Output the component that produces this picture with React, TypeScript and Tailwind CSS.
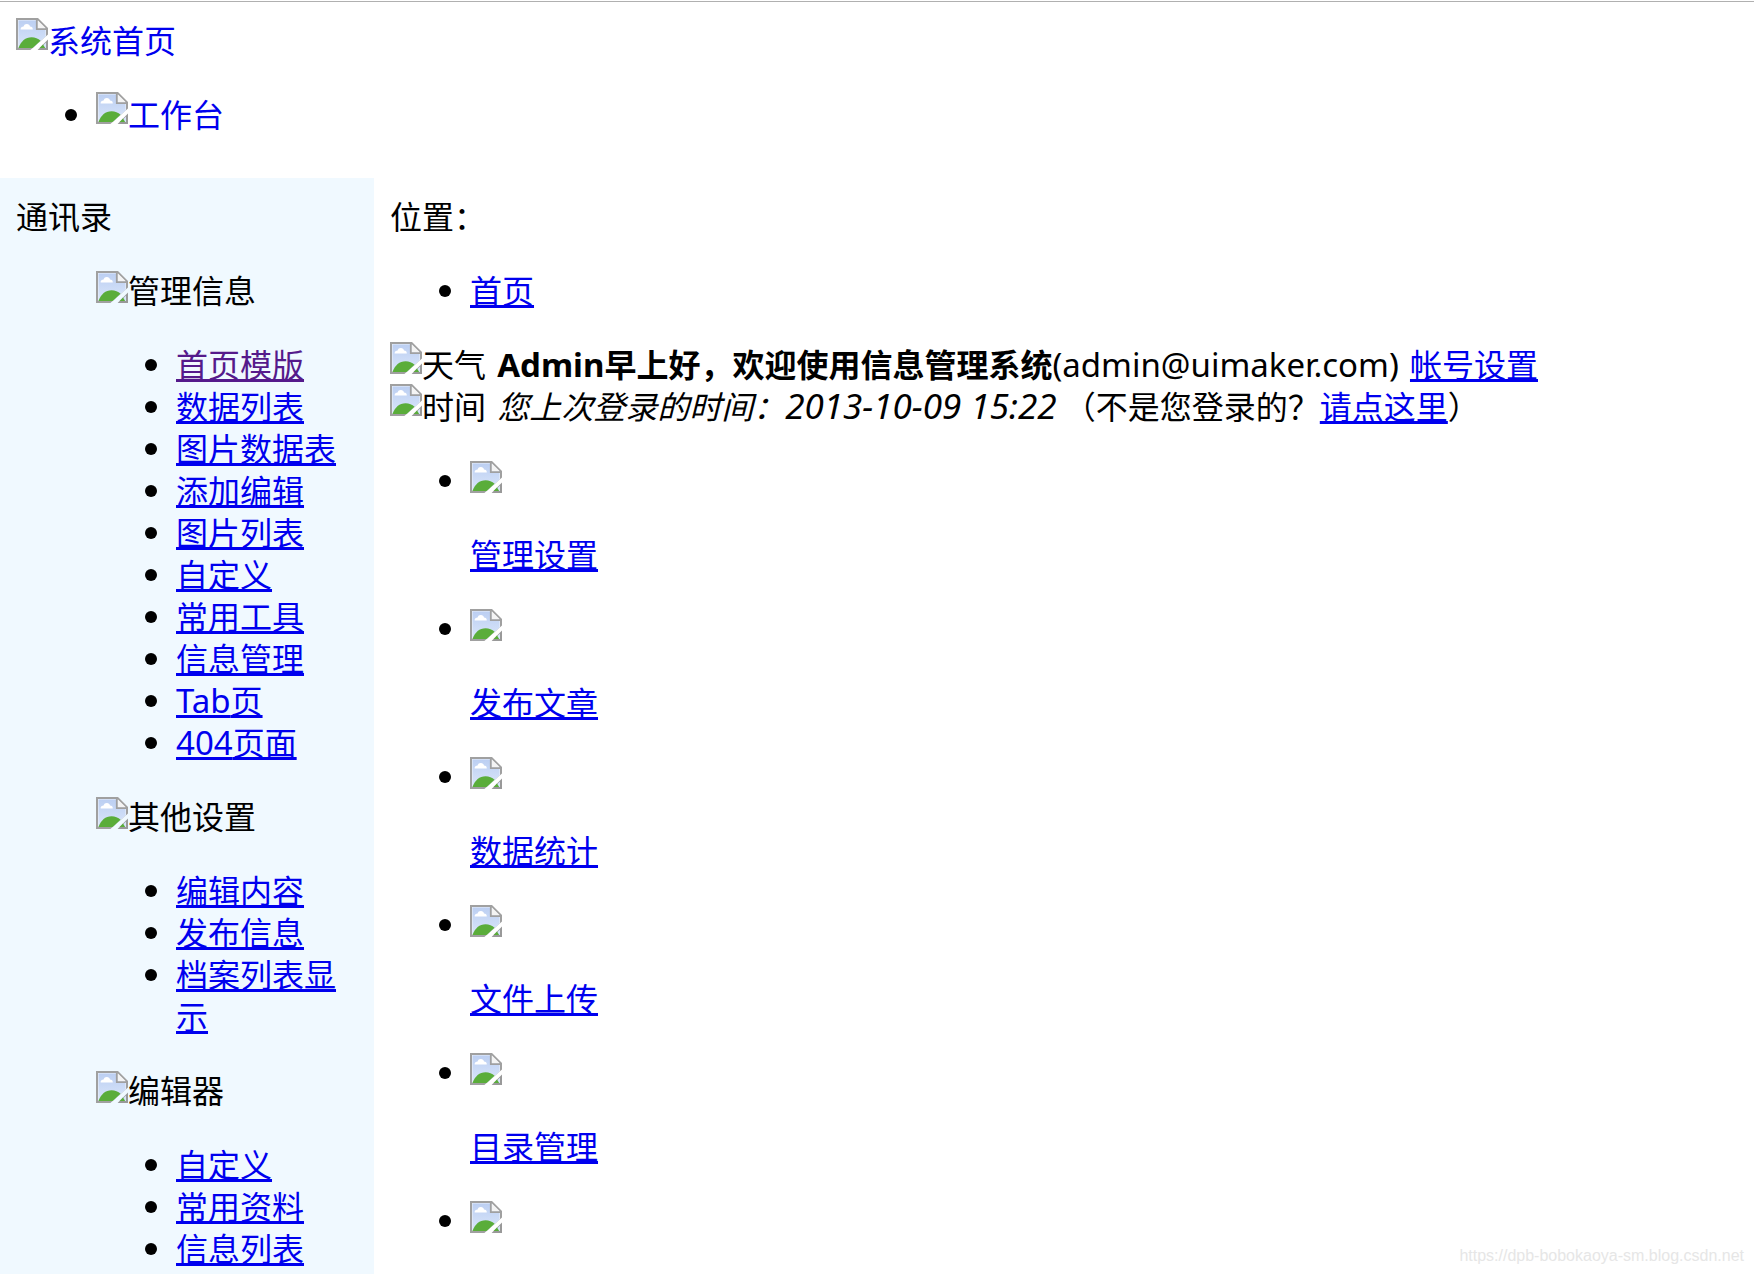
import React from 'react';

interface MenuGroup {
  title: string;
  items: { latin?: string; text: string; visited?: boolean }[];
}

const menuGroups: MenuGroup[] = [
  {
    title: '管理信息',
    items: [
      { text: '首页模版', visited: true },
      { text: '数据列表' },
      { text: '图片数据表' },
      { text: '添加编辑' },
      { text: '图片列表' },
      { text: '自定义' },
      { text: '常用工具' },
      { text: '信息管理' },
      { latin: 'Tab', text: '页' },
      { latin: '404', text: '页面' },
    ],
  },
  { title: '其他设置', items: [{ text: '编辑内容' }, { text: '发布信息' }, { text: '档案列表显示' }] },
  { title: '编辑器', items: [{ text: '自定义' }, { text: '常用资料' }, { text: '信息列表' }] },
];

const shortcuts = ['管理设置', '发布文章', '数据统计', '文件上传', '目录管理', ''];

const BrokenImage: React.FC<{ className?: string }> = ({ className = 'align-baseline' }) => (
  <svg viewBox="0 0 16 16" className={`inline-block size-8 ${className}`} aria-hidden="true">
    <defs>
      <linearGradient id="sky" x1="0" y1="0" x2="0" y2="1">
        <stop offset="0" stopColor="#bccff2" />
        <stop offset="1" stopColor="#dae6fa" />
      </linearGradient>
    </defs>
    <path d="M0 0H11L16 5V8.2L7.2 16H0Z" fill="#a0a0a0" />
    <path d="M1 1H10.5L15 5.5V9.1L8.3 15H1Z" fill="#e8effb" />
    <path d="M1.3 1.3H10V6H14.7V9.3L8.4 14.9H1.3Z" fill="url(#sky)" />
    <path d="M2.3 5.7C2.3 4.7 3 4.3 3.8 4.3C4 3.4 4.6 3 5.4 3C6.3 3 6.9 3.5 7 4.3C7.9 4.3 8.4 4.8 8.4 5.7Z" fill="#fff" />
    <path d="M1.2 15C2.4 11.6 4.8 9.6 7.8 9.6C9.5 9.6 11.1 10.3 12.3 11.4L8.3 15Z" fill="#5aad3a" />
    <path d="M10.4 0.5V5.6H15.5" fill="none" stroke="#a0a0a0" strokeWidth="0.9" />
    <path d="M11 1.2V5H14.8Z" fill="#f4f4f4" />
    <path d="M16 10.8V16H10.8Z" fill="#999" />
    <path d="M15 12.2V15H12.2Z" fill="#d6e4fa" />
    <path d="M13.5 13.2L14.6 15H11.8Z" fill="#5aad3a" />
  </svg>
);

const Latin: React.FC<{ children: React.ReactNode }> = ({ children }) => (
  <span className="font-['Noto_Sans',sans-serif] text-[33px] leading-none">{children}</span>
);

const Header: React.FC = () => (
  <header className="shrink-0 pt-px">
    <div className="border-t border-[#b0b0b0] px-4 pt-4 pb-11">
      <a href="#" className="block text-[#0000ee]">
        <BrokenImage className="align-top" />系统首页
      </a>
      <ul className="mt-8 list-disc pl-20">
        <li>
          <a href="#" className="text-[#0000ee]">
            <BrokenImage className="align-top" />工作台
          </a>
        </li>
      </ul>
    </div>
  </header>
);

const Sidebar: React.FC = () => (
  <nav className="w-[374px] shrink-0 overflow-hidden bg-[#f0f9ff] p-4">
    <div>通讯录</div>
    <dl className="pl-20">
      {menuGroups.map((group) => (
        <dd key={group.title} className="mt-8">
          <div>
            <BrokenImage />
            {group.title}
          </div>
          <ul className="mt-8 list-disc pl-20">
            {group.items.map((item) => (
              <li key={item.text}>
                <a href="#" className={`underline ${item.visited ? 'text-[#551a8b]' : 'text-[#0000ee]'}`}>
                  {item.latin && <Latin>{item.latin}</Latin>}
                  {item.text}
                </a>
              </li>
            ))}
          </ul>
        </dd>
      ))}
    </dl>
  </nav>
);

const Content: React.FC = () => (
  <main className="min-w-0 flex-1 overflow-hidden p-4">
    <div>位置：</div>
    <ul className="my-8 list-disc pl-20">
      <li>
        <a href="#" className="text-[#0000ee] underline">首页</a>
      </li>
    </ul>
    <div>
      <BrokenImage className="align-top" />天气{' '}
      <b className="ml-1 font-bold"><Latin>Admin</Latin>早上好，欢迎使用信息管理系统</b>
      <Latin>(admin@uimaker.com)</Latin>{' '}
      <a href="#" className="ml-1 text-[#0000ee] underline">帐号设置</a>
    </div>
    <div>
      <BrokenImage className="align-top" />时间{' '}
      <i className="ml-1">
        您上次登录的时间：
        <span className="font-['Noto_Sans',sans-serif] text-[35px] leading-none">2013-10-09 15:22</span>
      </i>{' '}
      （不是您登录的？
      <a href="#" className="text-[#0000ee] underline">请点这里</a>）
    </div>
    <ul className="mt-8 list-disc pl-20">
      {shortcuts.map((label) => (
        <li key={label} className="mb-8">
          <BrokenImage />
          {label && (
            <p className="mt-8">
              <a href="#" className="text-[#0000ee] underline">{label}</a>
            </p>
          )}
        </li>
      ))}
    </ul>
  </main>
);

const App: React.FC = () => (
  <div
    lang="zh-CN"
    className="relative flex h-screen flex-col overflow-hidden bg-white font-['Noto_Sans_CJK_SC',sans-serif] text-[32px] leading-[42px] text-black"
  >
    <Header />
    <div className="flex min-h-0 flex-1">
      <Sidebar />
      <Content />
    </div>
    <div className="absolute right-2.5 bottom-1.5 font-['Liberation_Sans',sans-serif] text-[16px] leading-6 text-[#e6e6e6]">
      https://dpb-bobokaoya-sm.blog.csdn.net
    </div>
  </div>
);

export default App;
